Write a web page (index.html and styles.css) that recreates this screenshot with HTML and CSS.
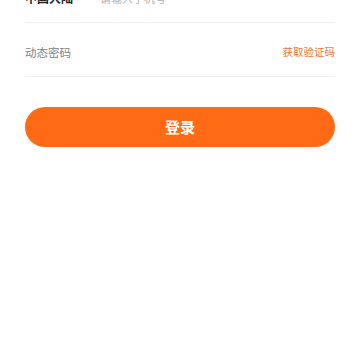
FILE: index.html
```html
<!DOCTYPE html>
<html lang="zh">
<head>
<meta charset="utf-8">
<link rel="stylesheet" href="styles.css">
</head>
<body>
<div class="form">
  <div class="row first">
    <span class="region">中国大陆</span>
    <span class="placeholder">请输入手机号</span>
  </div>
  <div class="row">
    <span class="label">动态密码</span>
    <span class="code">获取验证码</span>
  </div>
  <button class="login">登录</button>
</div>
</body>
</html>
```
FILE: styles.css
```css
html, body {
  margin: 0;
  padding: 0;
  background: #fff;
  font-family: "Noto Sans CJK SC", "Noto Sans", sans-serif;
}
.form {
  padding: 0 25px;
  display: flex;
  flex-direction: column;
}
.row {
  height: 49px;
  padding-top: 4px;
  border-bottom: 1px solid #eeeeee;
  display: flex;
  align-items: center;
}
.row.first {
  margin-top: -31px;
}
.region {
  font-size: 12px;
  font-weight: 700;
  color: #222;
  width: 75px;
}
.placeholder {
  font-size: 11px;
  color: #b0b0b0;
}
.label {
  font-size: 11.5px;
  color: #808080;
  flex: 1;
}
.code {
  font-size: 10.5px;
  color: #ea7536;
}
.login {
  margin-top: 30px;
  height: 40px;
  border: none;
  border-radius: 20px;
  background: #ff6a14;
  color: #fff;
  font-family: "Noto Sans CJK SC", sans-serif;
  font-size: 15px;
  font-weight: 700;
  padding: 0 0 1px;
}
```
